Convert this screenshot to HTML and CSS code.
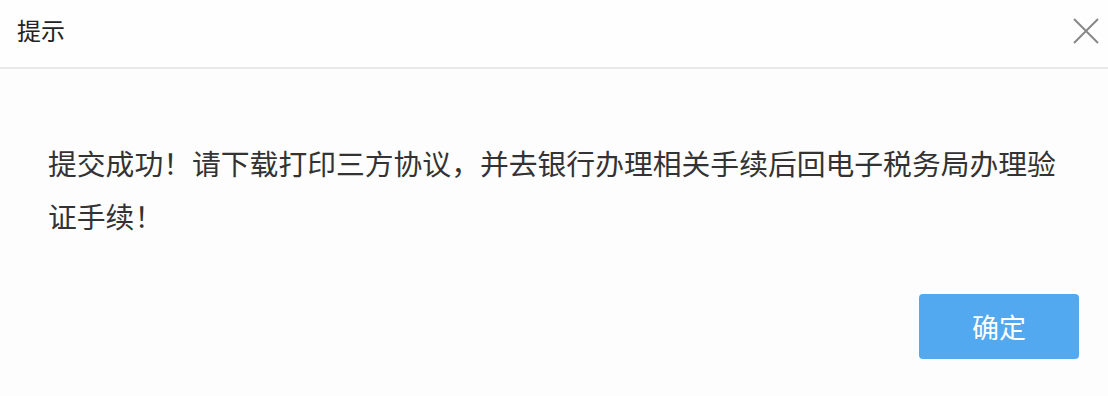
FILE: index.html
```html
<!DOCTYPE html>
<html>

<head>
    <title>提示</title>
    <link rel="stylesheet" href="styles.css">
</head>

<body>
    <div class="dialog">
        <div class="header">
            <span class="title">提示</span>
            <button class="close" aria-label="关闭">
                <svg width="28" height="28" viewBox="0 0 28 28">
                    <path d="M2 2 L26 26 M26 2 L2 26" stroke="#888" stroke-width="2" fill="none" />
                </svg>
            </button>
        </div>
        <div class="content">
            提交成功！请下载打印三方协议，并去银行办理相关手续后回电子税务局办理验证手续！
        </div>
        <div class="footer">
            <button class="ok">确定</button>
        </div>
    </div>
</body>

</html>
```

FILE: styles.css
```css
body {
    margin: 0;
    background: #fdfdfd;
    font-family: "Noto Sans CJK SC", "Microsoft YaHei", sans-serif;
    color: #333;
}

.dialog {
    width: 1108px;
    height: 396px;
    display: flex;
    flex-direction: column;
}

.header {
    height: 67px;
    border-bottom: 2px solid #e9e9e9;
    display: flex;
    align-items: center;
    justify-content: space-between;
    padding: 0 8px 0 17px;
    background: #fefefe;
}

.title {
    font-size: 24px;
    color: #222;
    margin-top: -8px;
}

.close {
    background: none;
    border: none;
    padding: 0;
    width: 28px;
    height: 28px;
    margin-top: -6px;
    cursor: pointer;
}

.content {
    padding: 67px 48px 0 48px;
    font-size: 28.8px;
    line-height: 53px;
    color: #333;
}

.footer {
    display: flex;
    justify-content: flex-end;
    padding: 0 29px;
    margin-top: auto;
    margin-bottom: 37px;
}

.ok {
    width: 160px;
    height: 65px;
    background: #52a9f0;
    border: none;
    border-radius: 4px;
    color: white;
    font-family: inherit;
    font-size: 27px;
    cursor: pointer;
}
```
